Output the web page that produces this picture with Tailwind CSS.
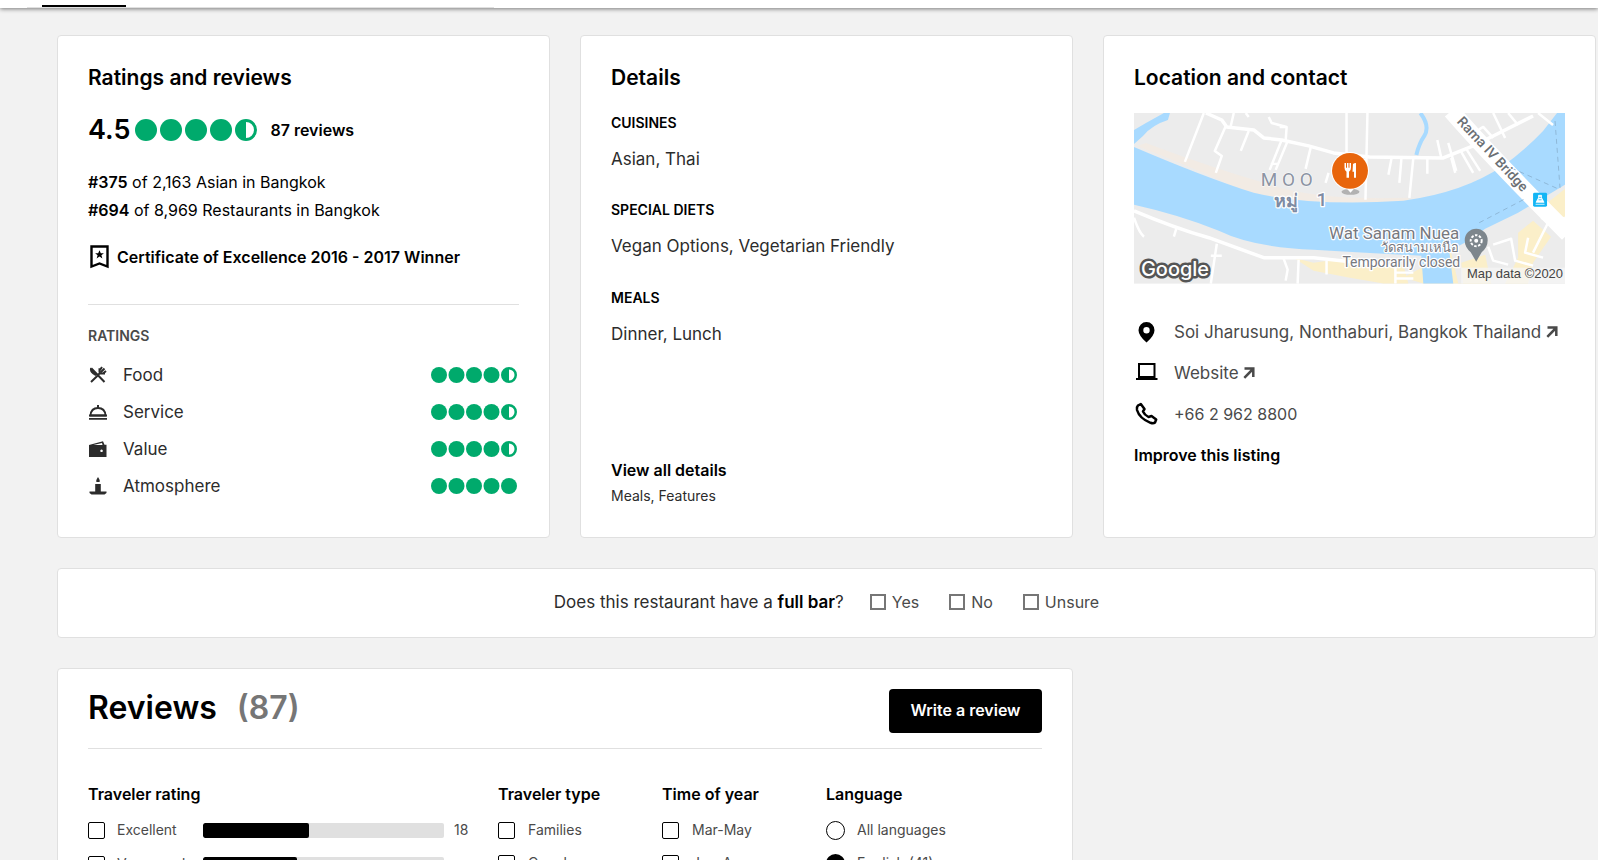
<!DOCTYPE html>
<html lang="en">
<head>
<meta charset="utf-8">
<meta name="viewport" content="width=device-width, initial-scale=1">
<title>Restaurant overview</title>
<script src="https://cdn.jsdelivr.net/npm/@tailwindcss/browser@4"></script>
</head>
<body class="h-screen overflow-hidden bg-[#f2f2f2] font-['Inter','Noto_Sans',sans-serif] text-base leading-7 text-[#2c2c2c]">

<svg class="hidden" aria-hidden="true">
  <symbol id="b45" viewBox="0 0 124 24">
    <g fill="#00aa6c"><circle cx="12" cy="12" r="11"/><circle cx="37" cy="12" r="11"/><circle cx="62" cy="12" r="11"/><circle cx="87" cy="12" r="11"/><path fill-rule="evenodd" d="M112 1a11 11 0 1 0 0 22a11 11 0 0 0 0-22zm0 3a8 8 0 0 1 0 16z"/></g>
  </symbol>
  <symbol id="s45" viewBox="0 0 88 16">
    <g fill="#00aa6c"><circle cx="8" cy="8" r="8"/><circle cx="25.500" cy="8" r="8"/><circle cx="43" cy="8" r="8"/><circle cx="60.500" cy="8" r="8"/><path fill-rule="evenodd" d="M78 0a8 8 0 1 0 0 16a8 8 0 0 0 0-16zm0 2.500a5.500 5.500 0 0 1 0 11z"/></g>
  </symbol>
  <symbol id="s50" viewBox="0 0 88 16">
    <g fill="#00aa6c"><circle cx="8" cy="8" r="8"/><circle cx="25.500" cy="8" r="8"/><circle cx="43" cy="8" r="8"/><circle cx="60.500" cy="8" r="8"/><circle cx="78" cy="8" r="8"/></g>
  </symbol>
  <symbol id="ext" viewBox="0 0 12 12">
    <path d="M1.500 1.500H10.300V10M10 2L1.300 10.800" fill="none" stroke="#4a4a4a" stroke-width="2.500"/>
  </symbol>
</svg>

<header class="relative h-2 bg-white shadow-[0_1px_4px_0_rgba(0,0,0,0.5)]">
  <div class="ml-[27px] flex h-2 w-[467px] items-end border-b border-[#e0e0e0] pl-[15px]"><div class="h-[2px] w-[84px] bg-black"></div></div>
</header>

<main class="grid grid-cols-3 gap-[30px] pt-[27px] pr-0.5 pl-[57px]">

  <section class="h-[503px] rounded-sm border border-[#e0e0e0] bg-white px-[30px] pt-[28px]">
    <h2 class="text-[21px] leading-7 font-semibold text-black">Ratings and reviews</h2>
    <div class="mt-6 flex h-7 items-center text-black">
      <span class="text-[27px] font-semibold">4.5</span>
      <svg class="ml-1 h-6 w-[124px]" role="img" aria-label="4.5 of 5 bubbles"><use href="#b45"/></svg>
      <a href="#reviews" class="ml-3 font-semibold">87 reviews</a>
    </div>
    <div class="mt-6 text-black">
      <div><b class="font-semibold">#375</b> of 2,163 Asian in Bangkok</div>
      <div><b class="font-semibold">#694</b> of 8,969 Restaurants in Bangkok</div>
    </div>
    <div class="mt-[19px] flex h-7 items-center gap-2 font-semibold text-black">
      <svg class="ml-0.5 h-6 w-[19px]" viewBox="0 0 19 24"><path d="M1.500 1.500H17.500V21.500L9.500 18.500L1.500 21.500Z" fill="none" stroke="#000" stroke-width="2.400"/><path d="M9.500 5.300l1.300 3h3.100l-2.500 2 1 3.200-2.900-1.900-2.900 1.900 1-3.200-2.500-2h3.100z" fill="#000"/></svg>
      <span class="whitespace-nowrap">Certificate of Excellence 2016 - 2017 Winner</span>
    </div>
    <div class="mt-[33px] border-t border-[#e0e0e0] pt-[17px]">
      <h3 class="text-sm leading-7 font-semibold text-[#4a4a4a]">RATINGS</h3>
      <ul class="mt-[11px] flex flex-col gap-[9px] text-[17px] leading-7">
        <li class="flex items-center"><svg class="mr-[15px] h-5 w-5" viewBox="0 0 20 20"><g fill="none" stroke="#2c2c2c" stroke-width="2"><path d="M3.200 3.200L16.500 17M3 17L9.500 10.800M9 11L12.500 7.500M11.500 3.200V6.500Q11.500 8.500 13.500 8.500H17M14 2L12 5M18 6L15 8.500M16.500 3.500L13 7"/></g><path d="M2 2.500Q1.500 7 4.500 9L7.500 11L9.500 9Z" fill="#2c2c2c"/></svg>Food<svg class="ml-auto h-4 w-[88px]" role="img" aria-label="4.5 of 5"><use href="#s45"/></svg></li>
        <li class="flex items-center"><svg class="mr-[15px] h-5 w-5" viewBox="0 0 20 20"><path d="M2.500 13.500Q3 6 10 6T17.500 13.500Z" fill="none" stroke="#2c2c2c" stroke-width="1.800"/><path d="M9 3h2v3H9zM1 12.600h18v1.800H1zM1 16h18v1.800H1z" fill="#2c2c2c"/></svg>Service<svg class="ml-auto h-4 w-[88px]" role="img" aria-label="4.5 of 5"><use href="#s45"/></svg></li>
        <li class="flex items-center"><svg class="mr-[15px] h-5 w-5" viewBox="0 0 20 20"><path fill="#2c2c2c" fill-rule="evenodd" d="M1 6L15 2.200L16.500 5.800H18.500V18H1ZM5.500 6H14.500L14 4ZM13.500 10.500a1.300 1.300 0 1 0 .1 0z"/></svg>Value<svg class="ml-auto h-4 w-[88px]" role="img" aria-label="4.5 of 5"><use href="#s45"/></svg></li>
        <li class="flex items-center"><svg class="mr-[15px] h-5 w-5" viewBox="0 0 20 20"><path fill="#2c2c2c" d="M10 1Q12.500 4.500 11.500 6H8.500Q7.500 4.500 10 1ZM7.200 8H12.800V15.500H18.500V17L16.500 18.500H3.500L1.500 17V15.500H7.200Z"/></svg>Atmosphere<svg class="ml-auto h-4 w-[88px]" role="img" aria-label="5 of 5"><use href="#s50"/></svg></li>
      </ul>
    </div>
  </section>

  <section class="flex h-[503px] flex-col rounded-sm border border-[#e0e0e0] bg-white px-[30px] pt-[28px] pb-[29px]">
    <h2 class="text-[21px] leading-7 font-semibold text-black">Details</h2>
    <dl class="mt-[17px] text-[17px]">
      <dt class="text-sm leading-7 font-semibold text-black">CUISINES</dt>
      <dd class="mt-2 leading-7">Asian, Thai</dd>
      <dt class="mt-[23px] text-sm leading-7 font-semibold text-black">SPECIAL DIETS</dt>
      <dd class="mt-2 leading-7">Vegan Options, Vegetarian Friendly</dd>
      <dt class="mt-[24px] text-sm leading-7 font-semibold text-black">MEALS</dt>
      <dd class="mt-2 leading-7">Dinner, Lunch</dd>
    </dl>
    <div class="mt-auto">
      <a href="#details" class="block leading-7 font-semibold text-black">View all details</a>
      <div class="text-sm leading-6">Meals, Features</div>
    </div>
  </section>

  <section class="h-[503px] rounded-sm border border-[#e0e0e0] bg-white px-[30px] pt-[28px]">
    <h2 class="text-[21px] leading-7 font-semibold text-black">Location and contact</h2>
    <svg class="mt-[21px] block aspect-[432/171] w-full" viewBox="0 0 432 171" preserveAspectRatio="xMidYMid slice" role="img" aria-label="Map of the restaurant">
      <rect width="432" height="171" fill="#ececec"/>
      <path d="M3 33Q60 55 110 78Q180 95 275 88L275 85Q180 88 130 70Q70 52 12 30Z" fill="#f2ebe4"/>
      <path d="M160 145L180 150L215 145L270 152L275 171H250L215 165L180 158ZM270 165L335 130L355 140L350 171H290Z" fill="#fbefc9"/>
      <path d="M0 34Q70 64 120 80Q180 94 270 88Q330 80 370 53Q392 37 410 18L424 0H432V72Q400 98 355 118L316 138L320 171H290L288 143Q230 140 180 137Q120 135 85 118Q45 102 0 92Z" fill="#a8daff"/>
      <path d="M0 31V17L12 10L30 0H36L34 7Q18 12 9 23Z" fill="#a8daff"/>
      <path d="M352 116L385 100L432 72V171H325L318 140Z" fill="#ececec"/>
      <path d="M385 120L400 108L418 124L400 150L395 171H372L385 145ZM412 92L432 76V120ZM328 150L352 142L358 171H330Z" fill="#fbefc9"/>
      <path d="M287 0Q297 13 291 23Q286 30 283 42" fill="none" stroke="#a8daff" stroke-width="4"/>
      <g fill="none" stroke="#fff" stroke-width="2.500" stroke-linejoin="round">
        <path d="M72 0L88 7L93 14L120 17L130 25L148 27L175 33L200 40L236 44L310 45L340 33L360 23L400 3" stroke-width="3.500"/>
        <path d="M70 0L51 49M92 13L81 38L88 43L82 60M115 18L107 38M100 0L97 13M112 0L115 4M148 27L136 57M154 28L142 57M137 51H145M152 28L153 14L138 10L135 4M146 14H153M177 35L172 56M213 0V41M234 0L232 87M192 70L195 60M258 46L255 62M268 46L266 70M280 45L276 85M294 46V61M304 27L308 45M315 30L323 58M328 39L340 60M333 36L347 58M345 33Q338 20 350 14L360 25M360 0L372 25M375 0L385 12M405 0L420 12M318 45L322 60"/>
        <path d="M0 98Q40 115 75 125L130 145L180 145L245 152" stroke-width="3.500"/>
        <path d="M0 105Q5 120 10 124M43 114L40 124M83 131L77 171M77 143H88M150 146L154 157L152 168M165 147L164 171M193 148V162M245 150L262 155V171M262 160H280M262 166H280M360 132L378 126L382 148L400 153M355 134L360 148L375 152M395 125L392 140L410 145M432 105L420 110L408 105M415 110L400 140"/>
        <path d="M318 -2Q360 46 435 121" stroke-width="17"/>
      </g>
      <g fill="none" stroke="#8fb8d8" stroke-width="1" stroke-dasharray="5 4"><path d="M422 8L427 75M378 55L425 76M346 110L392 86"/></g>
      <g font-family="Roboto, sans-serif" stroke="#fff" stroke-width="2.500" paint-order="stroke" stroke-linejoin="round" fill="#77797f">
        <text x="127" y="73" font-size="19" fill="#8c94a3" stroke-width="1">M O O</text>
        <text x="140" y="94" font-size="18" font-weight="700" fill="#7e8ba3">หมู่</text>
        <text x="183" y="93" font-size="19" font-weight="500" fill="#7e8ba3">1</text>
        <text x="326" y="126" font-size="17" text-anchor="end">Wat Sanam Nuea</text>
        <text x="326" y="139" font-size="13" text-anchor="end">วัดสนามเหนือ</text>
        <text x="327" y="154" font-size="14" text-anchor="end">Temporarily closed</text>
        <text transform="translate(323 9) rotate(47)" font-size="14" font-weight="500" fill="#6b6f74">Rama IV Bridge</text>
        <text x="7" y="163" font-family="Inter, sans-serif" font-size="20" font-weight="500" fill="#fff" stroke="#555" stroke-width="5">Google</text>
      </g>
      <rect x="328" y="155" width="104" height="16" fill="#f5f5f5" fill-opacity=".75"/>
      <text x="430" y="165" font-family="'Liberation Sans', sans-serif" font-size="13" fill="#444" text-anchor="end">Map data ©2020</text>
      <ellipse cx="217" cy="79" rx="9" ry="3" fill="#777" opacity=".5"/>
      <path d="M211 73H223L217 80Z" fill="#fff"/>
      <circle cx="216.500" cy="58" r="19" fill="#fff"/><circle cx="216.500" cy="58" r="18" fill="#e8650c"/>
      <path d="M211 50v5q0 3 2 4v6h2.500v-6q2-1 2-4v-5h-1.500v5h-1v-5h-1.500v5h-1v-5zM219.500 51q1-1 3-1v15h-2v-6h-1.500z" fill="#fff"/>
      <rect x="400" y="80" width="14" height="14" rx="1.500" fill="#12b5f5"/><path d="M405.500 85V82.500H408.500V85L411 89.500H403ZM402.500 91.500H411.500" fill="#fff" stroke="#fff" stroke-width=".8"/><path d="M406 84.500h2M405.500 87h3" stroke="#12b5f5" stroke-width=".8"/>
      <path d="M343 116a11.500 11.500 0 0 1 11.500 11.500q0 7-6 12l-5.500 9.500l-5.500-9.500q-6-5-6-12a11.500 11.500 0 0 1 11.500-11.500z" fill="#7d868c"/>
      <circle cx="343" cy="128" r="5.500" fill="none" stroke="#fff" stroke-width="2" stroke-dasharray="2.500 1.500"/><circle cx="343" cy="128" r="2" fill="#fff"/>
    </svg>
    <ul class="mt-[34px] flex flex-col gap-[13px] text-[17px] leading-7 text-[#4a4a4a]">
      <li class="flex items-center"><svg class="mr-4 h-6 w-6" viewBox="0 0 24 24"><path fill="#000" fill-rule="evenodd" d="M12.500 2a8 8 0 0 1 8 8.200q0 5.300-8 12.300q-8-7-8-12.300a8 8 0 0 1 8-8.200zm0 5a3.200 3.200 0 1 0 0 6.400a3.200 3.200 0 0 0 0-6.400z"/></svg><a href="#map" class="whitespace-nowrap">Soi Jharusung, Nonthaburi, Bangkok Thailand <svg class="inline h-3 w-3 align-baseline"><use href="#ext"/></svg></a></li>
      <li class="flex items-center"><svg class="mr-4 h-6 w-6" viewBox="0 0 24 24"><path d="M5 3H20.500V16H5Z" fill="none" stroke="#000" stroke-width="2"/><path d="M2 17h21.500v2H2z"/></svg><a href="#website">Website <svg class="inline h-3 w-3 align-baseline"><use href="#ext"/></svg></a></li>
      <li class="flex items-center"><svg class="mr-4 h-6 w-6" viewBox="0 0 24 24"><path d="M4 3.500L6.800 2L10.500 7L9 9.500Q10.500 13 14.500 15L17.500 14L22.200 17.500L21 20.500Q19.500 21.800 16.500 20.800Q5.500 16.500 3 8Q2.500 5 4 3.500Z" fill="none" stroke="#000" stroke-width="2.500" stroke-linejoin="round"/></svg><a href="tel:+6629628800" class="text-base leading-7">+66 2 962 8800</a></li>
      <li class="text-base leading-7"><a href="#improve" class="font-semibold text-black">Improve this listing</a></li>
    </ul>
  </section>

  <form class="col-span-3 flex h-[70px] items-center justify-center rounded-sm border border-[#e0e0e0] bg-white pb-0.5 text-[#4a4a4a]">
    <p class="mr-[26px] text-[17px] leading-7 text-[#2c2c2c]">Does this restaurant have a <b class="font-semibold text-black">full bar</b>?</p>
    <div class="flex gap-[30px]">
      <label class="flex items-center gap-1.5"><input type="checkbox" class="size-4 appearance-none border-2 border-[#767676]">Yes</label>
      <label class="flex items-center gap-1.5"><input type="checkbox" class="size-4 appearance-none border-2 border-[#767676]">No</label>
      <label class="flex items-center gap-1.5"><input type="checkbox" class="size-4 appearance-none border-2 border-[#767676]">Unsure</label>
    </div>
  </form>

  <section id="reviews" class="col-span-2 rounded-sm border border-[#e0e0e0] bg-white px-[30px] pt-5 pb-8">
    <div class="flex items-start justify-between border-b border-[#e0e0e0] pb-[15px]">
      <h2 class="flex gap-5 text-[32px] leading-[38px] font-semibold text-black">Reviews <span class="text-[#767676]">(87)</span></h2>
      <button type="button" class="h-11 w-[153px] rounded-sm bg-black pb-0.5 font-semibold text-white">Write a review</button>
    </div>
    <div class="grid grid-cols-[410px_164px_164px_1fr] pt-[31px] text-sm leading-6 text-[#4a4a4a]">
      <fieldset>
        <legend class="text-base leading-7 font-semibold text-black">Traveler rating</legend>
        <div class="mt-2.5 flex flex-col gap-2.5">
          <label class="flex items-center"><input type="checkbox" class="mr-3 size-[17px] appearance-none rounded-xs border border-black"><span class="w-[86px]">Excellent</span><span class="h-[15px] w-[241px] overflow-hidden rounded-xs bg-[#e0e0e0]"><span class="block h-full rounded-xs bg-black" style="width:44%"></span></span><span class="ml-2.5">18</span></label>
          <label class="flex items-center"><input type="checkbox" class="mr-3 size-[17px] appearance-none rounded-xs border border-black"><span class="w-[86px]">Very good</span><span class="h-[15px] w-[241px] overflow-hidden rounded-xs bg-[#e0e0e0]"><span class="block h-full rounded-xs bg-black" style="width:39%"></span></span></label>
        </div>
      </fieldset>
      <fieldset>
        <legend class="text-base leading-7 font-semibold text-black">Traveler type</legend>
        <div class="mt-2.5 flex flex-col gap-[9px]">
          <label class="flex items-center gap-[13px]"><input type="checkbox" class="size-[17px] appearance-none rounded-xs border border-black">Families</label>
          <label class="flex items-center gap-[13px]"><input type="checkbox" class="size-[17px] appearance-none rounded-xs border border-black">Couples</label>
        </div>
      </fieldset>
      <fieldset>
        <legend class="text-base leading-7 font-semibold text-black">Time of year</legend>
        <div class="mt-2.5 flex flex-col gap-[9px]">
          <label class="flex items-center gap-[13px]"><input type="checkbox" class="size-[17px] appearance-none rounded-xs border border-black">Mar-May</label>
          <label class="flex items-center gap-[13px]"><input type="checkbox" class="size-[17px] appearance-none rounded-xs border border-black">Jun-Aug</label>
        </div>
      </fieldset>
      <fieldset>
        <legend class="text-base leading-7 font-semibold text-black">Language</legend>
        <div class="mt-2.5 flex flex-col gap-[9px]">
          <label class="flex items-center gap-3"><input type="radio" name="lang" class="size-[19px] appearance-none rounded-full border border-black checked:border-[7px]">All languages</label>
          <label class="flex items-center gap-3"><input type="radio" name="lang" checked class="size-[19px] appearance-none rounded-full border border-black checked:border-[7px]">English (41)</label>
        </div>
      </fieldset>
    </div>
  </section>
</main>
</body>
</html>
